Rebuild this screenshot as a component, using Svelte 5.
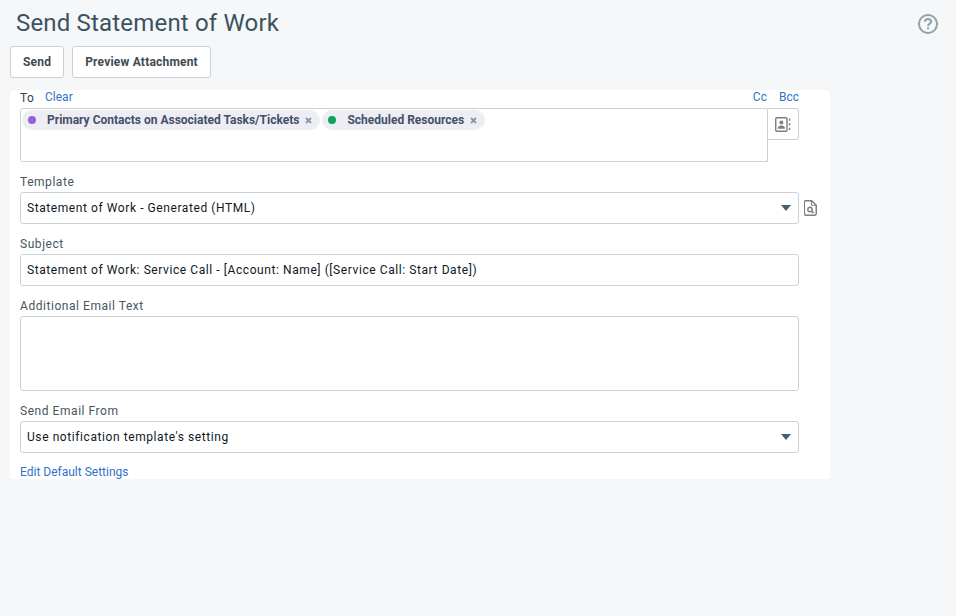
<script lang="ts">
	const chips = [
		{ label: 'Primary Contacts on Associated Tasks/Tickets', color: '#9162d4' },
		{ label: 'Scheduled Resources', color: '#0da35e' },
	];
</script>

<div class="page">
	<header class="header">
		<h1 class="title">Send Statement of Work</h1>
		<svg class="help" width="22" height="22" viewBox="0 0 22 22" aria-hidden="true">
			<circle cx="11" cy="11" r="9" fill="none" stroke="#8fa1ab" stroke-width="2" />
			<path d="M7.9 8.8c0-1.8 1.4-2.8 3.1-2.8s3.1 1 3.1 2.6c0 2.300-3.100 2.300-3.100 4.400" fill="none" stroke="#8fa1ab" stroke-width="2" />
			<rect x="10" y="14.200" width="2" height="2" fill="#8fa1ab" />
		</svg>
	</header>

	<div class="toolbar">
		<button class="btn">Send</button>
		<button class="btn">Preview Attachment</button>
	</div>

	<form class="panel">
		<div class="to-head">
			<span class="to-label">To</span>
			<span class="link clear">Clear</span>
			<span class="spacer"></span>
			<span class="link">Cc</span>
			<span class="link">Bcc</span>
		</div>
		<div class="to-row">
			<div class="to-box">
				{#each chips as chip}
					<span class="chip">
						<span class="dot" style="background: {chip.color}"></span>
						<span class="chip-text">{chip.label}</span>
						<svg class="chip-x" width="7" height="7" viewBox="0 0 7 7" aria-hidden="true">
							<path d="M1 1l5 5M6 1l-5 5" stroke="#8d94a8" stroke-width="1.800" />
						</svg>
					</span>
				{/each}
			</div>
			<div class="book-btn">
				<svg width="16" height="15" viewBox="0 0 17 16" aria-hidden="true">
					<rect x="0.750" y="0.750" width="12" height="14.500" rx="1" fill="none" stroke="#7b8084" stroke-width="1.500" />
					<circle cx="6.750" cy="5.800" r="2.100" fill="#7b8084" />
					<path d="M2.800 12.500c0-2.400 1.800-3.500 3.950-3.500s3.950 1.100 3.950 3.500z" fill="#7b8084" />
					<path d="M15.500 1.500v2.500M15.500 6.500v2.500M15.500 11.500v2.500" stroke="#7b8084" stroke-width="1.500" />
				</svg>
			</div>
		</div>

		<label class="field-label" for="template">Template</label>
		<div class="with-icon">
			<div class="control select" id="template">
				<span>Statement of Work - Generated (HTML)</span>
				<span class="caret"></span>
			</div>
			<svg class="doc-icon" width="13" height="16" viewBox="0 0 13 16" aria-hidden="true">
				<path d="M1.700 0.750h6l4.550 4.550v8.500a1.400 1.400 0 0 1-1.400 1.400h-9.150a1.400 1.400 0 0 1-1.400-1.400v-11.650a1.400 1.400 0 0 1 1.400-1.400z" fill="none" stroke="#7b8084" stroke-width="1.500" />
				<path d="M7.500 1v4.300h4.500" fill="none" stroke="#7b8084" stroke-width="1" />
				<circle cx="6" cy="9.500" r="2.200" fill="none" stroke="#7b8084" stroke-width="1.400" />
				<path d="M7.600 11.100l2 2" stroke="#7b8084" stroke-width="1.600" />
			</svg>
		</div>

		<label class="field-label" for="subject">Subject</label>
		<div class="control" id="subject">Statement of Work: Service Call - [Account: Name] ([Service Call: Start Date])</div>

		<label class="field-label" for="extra">Additional Email Text</label>
		<div class="control textarea" id="extra"></div>

		<label class="field-label" for="from">Send Email From</label>
		<div class="control select" id="from">
			<span>Use notification template's setting</span>
			<span class="caret"></span>
		</div>

		<div class="edit-row"><span class="link">Edit Default Settings</span></div>
	</form>
</div>

<style>
	:global(body) {
		margin: 0;
		background: #f5f7f9;
	}
	.page {
		height: 616px;
		background: #f5f7f9;
		font-family: Roboto, "Liberation Sans", sans-serif;
		font-size: 12px;
		letter-spacing: 0.55px;
		color: #3f4a52;
		box-sizing: border-box;
		padding: 0 17px 0 10px;
	}
	.header {
		display: flex;
		align-items: center;
		justify-content: space-between;
		height: 46px;
		padding-left: 6px;
	}
	.title {
		margin: 0;
		font-size: 24px;
		font-weight: 400;
		letter-spacing: 0.18px;
		color: #3c525f;
	}
	.help { margin-top: 2px; }
	.toolbar {
		display: flex;
		gap: 8px;
		height: 32px;
	}
	.btn {
		padding: 0 12px;
		background: #fff;
		border: 1px solid #ccd2d4;
		border-radius: 3px;
		font: inherit;
		font-weight: 700;
		letter-spacing: 0.2px;
		color: #3f4a52;
	}
	.panel {
		display: flex;
		flex-direction: column;
		width: 820px;
		height: 389px;
		margin-top: 12px;
		padding-left: 10px;
		box-sizing: border-box;
		background: #fff;
		border-radius: 5px 5px 0 0;
	}
	.to-head {
		display: flex;
		align-items: flex-start;
		width: 779px;
		height: 18px;
	}
	.to-label {
		margin-top: 1px;
		letter-spacing: 0.3px;
		color: #3a3f42;
	}
	.clear { margin-left: 11px; }
	.spacer { flex: 1; }
	.link {
		color: #2f73c8;
		line-height: 14px;
		letter-spacing: 0;
	}
	.to-head .link + .link { margin-left: 12px; }
	.to-row {
		display: flex;
		align-items: flex-start;
	}
	.to-box {
		display: flex;
		align-items: flex-start;
		gap: 2px;
		width: 748px;
		height: 54px;
		padding: 1px;
		box-sizing: border-box;
		border: 1px solid #ccd2d4;
		border-radius: 3px 0 0 3px;
	}
	.chip {
		display: flex;
		align-items: center;
		height: 20px;
		padding: 0 8px 0 6px;
		background: #edeef4;
		border-radius: 10px;
		font-weight: 700;
		letter-spacing: 0;
		color: #444f6a;
	}
	.dot {
		width: 8px;
		height: 8px;
		border-radius: 50%;
	}
	.chip-text { margin-left: 11px; }
	.chip-x { margin-left: 6px; }
	.book-btn {
		display: flex;
		align-items: center;
		justify-content: center;
		width: 31px;
		height: 32px;
		box-sizing: border-box;
		margin-left: 0;
		border: 1px solid #ccd2d4;
		border-left: 0;
		border-radius: 0 3px 3px 0;
	}
	.field-label {
		display: block;
		height: 14px;
		margin: 13px 0 3px;
		line-height: 14px;
		color: #46555f;
	}
	.to-row + .field-label { margin-top: 13px; }
	.control {
		display: flex;
		align-items: center;
		justify-content: space-between;
		width: 779px;
		height: 32px;
		padding: 0 6px;
		box-sizing: border-box;
		border: 1px solid #ccd2d4;
		border-radius: 3px;
		font-weight: 400;
		letter-spacing: 0.58px;
		color: #10181e;
	}
	.textarea { height: 75px; }
	.select { padding-right: 7px; }
	.caret {
		width: 0;
		height: 0;
		border-left: 5px solid transparent;
		border-right: 5px solid transparent;
		border-top: 6px solid #46606f;
	}
	.with-icon {
		display: flex;
		align-items: center;
		gap: 5px;
	}
	.edit-row { margin-top: 12px; }
</style>
